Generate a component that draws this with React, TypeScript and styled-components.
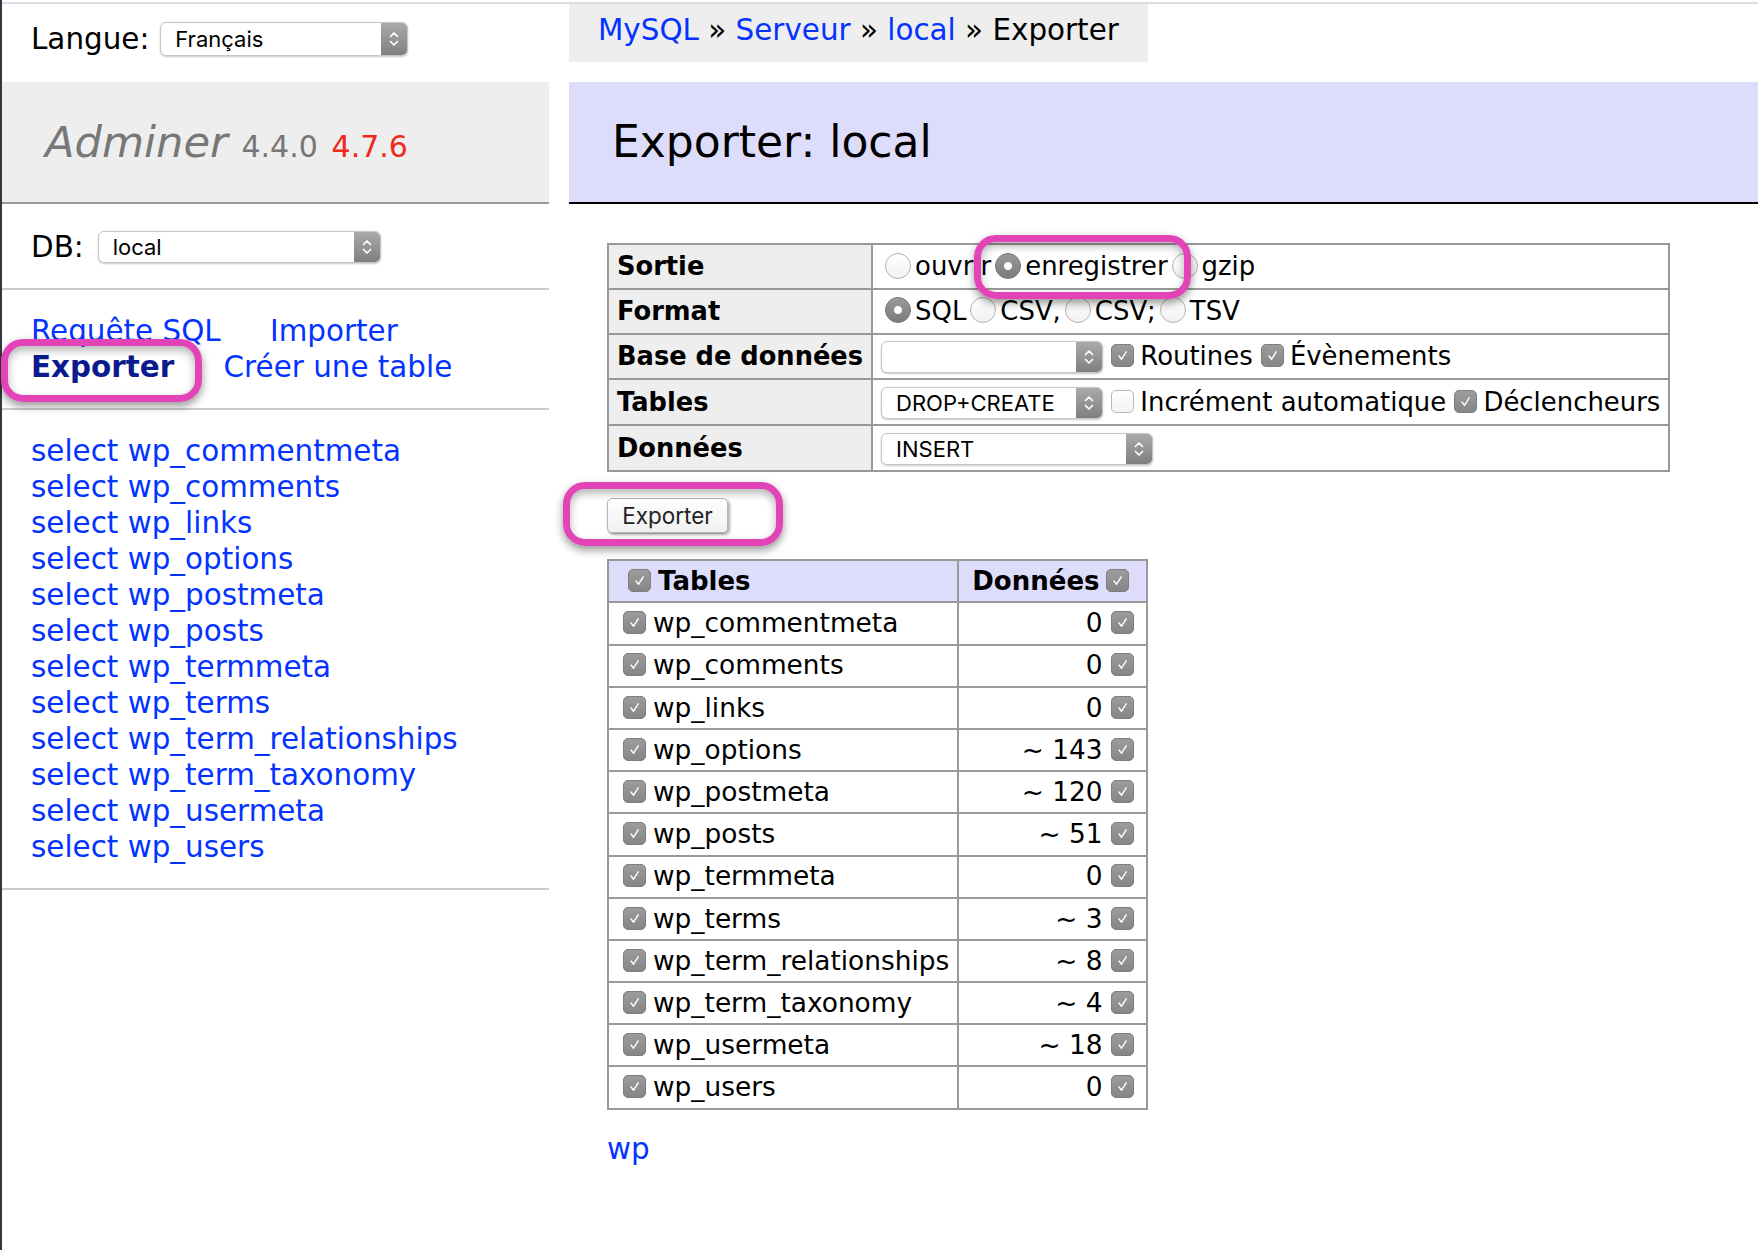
import React from "react";
import styled, { createGlobalStyle, css } from "styled-components";

const GlobalStyle = createGlobalStyle`
  html, body { margin: 0; padding: 0; background: #fff; }
  body { font-family: "DejaVu Sans", Verdana, sans-serif; color: #000; }
  * { box-sizing: border-box; }
`;

const LINK = "#0433ff";
const NAVY = "#0b1a8c";
const CONTROL_FONT = `"Inter", "Liberation Sans", Arial, sans-serif`;

const Page = styled.div`
  position: relative;
  display: flex;
  align-items: flex-start;
  min-height: 1250px;
  padding-top: 4px;
  border-left: 2px solid #34373d;
  background: linear-gradient(#fff 0 2px, #dcdce4 2px 4px, #fff 4px);
  font-family: "DejaVu Sans", Verdana, sans-serif;
  font-size: 29.4px;
  line-height: 36px;
`;

/* ---------- sidebar ---------- */
const Sidebar = styled.aside`
  width: 547px;
  flex: none;
  display: flex;
  flex-direction: column;
`;

const LangBar = styled.div`
  display: flex;
  align-items: center;
  height: 78px;
  padding: 9px 29px 17px;
`;

const Label = styled.span`
  color: #000;
  white-space: nowrap;
`;

const Logo = styled.h1`
  margin: 0;
  height: 122px;
  font-size: 43.2px;
  line-height: 54px;
  font-weight: normal;
  color: #777;
  background: #eee;
  padding: 33px 43px 33px;
  border-bottom: 2px solid #999;
  white-space: nowrap;
`;

const LogoName = styled.a`
  color: #777;
  font-style: italic;
  text-decoration: none;
`;

const Version = styled.span<{ $latest?: boolean }>`
  font-size: 30px;
  line-height: 1;
  color: ${(p) => (p.$latest ? "#ee2a1e" : "#777")};
`;

const MenuSection = styled.div<{ $row?: boolean }>`
  padding: 23px 29px;
  border-bottom: 2px solid #ccc;
  ${(p) =>
    p.$row &&
    css`
      display: flex;
      align-items: center;
      height: 86px;
      padding-top: 25px;
    `}
`;

const MenuLink = styled.a<{ $active?: boolean }>`
  color: ${(p) => (p.$active ? NAVY : LINK)};
  font-weight: ${(p) => (p.$active ? "bold" : "normal")};
  text-decoration: none;
  white-space: nowrap;
  margin-right: 40px;
`;

const TableEntry = styled.div`
  white-space: nowrap;
`;

const PlainLink = styled.a`
  color: ${LINK};
  text-decoration: none;
`;

/* ---------- select (mac style) ---------- */
const SelectBox = styled.span<{ $w: number; $small?: boolean; $ml?: number }>`
  display: inline-flex;
  align-items: stretch;
  width: ${(p) => p.$w}px;
  height: ${(p) => (p.$small ? 32 : 34)}px;
  margin-left: ${(p) => p.$ml ?? 0}px;
  border: 1px solid #c6c6c6;
  border-radius: 6px;
  background: #fff;
  box-shadow: 0 1px 2px rgba(0, 0, 0, 0.22);
  overflow: hidden;
  vertical-align: middle;
  font-family: ${CONTROL_FONT};
  font-size: 22px;
  line-height: 1;
  color: #000;
  font-weight: normal;
`;

const SelectText = styled.span`
  flex: 1;
  display: flex;
  align-items: center;
  padding-left: 14px;
  white-space: nowrap;
`;

const Stepper = styled.span`
  width: 26px;
  flex: none;
  display: flex;
  align-items: center;
  justify-content: center;
  background: linear-gradient(#aaaaaa, #7f7f7f);
`;

const Select: React.FC<{ w: number; value: string; small?: boolean; ml?: number }> = ({
  w,
  value,
  small,
  ml,
}) => (
  <SelectBox $w={w} $small={small} $ml={ml}>
    <SelectText>{value}</SelectText>
    <Stepper>
      <svg width="12" height="20" viewBox="0 0 12 20" fill="none">
        <path d="M2.5 7.5 L6 4 L9.5 7.5" stroke="#fff" strokeWidth="1.7" strokeLinecap="round" strokeLinejoin="round" />
        <path d="M2.5 12.5 L6 16 L9.5 12.5" stroke="#fff" strokeWidth="1.7" strokeLinecap="round" strokeLinejoin="round" />
      </svg>
    </Stepper>
  </SelectBox>
);

/* ---------- checkbox & radio ---------- */
const Box = styled.span<{ $on: boolean; $ml: number; $mr: number }>`
  display: inline-flex;
  align-items: center;
  justify-content: center;
  width: 23px;
  height: 23px;
  border-radius: 5px;
  vertical-align: middle;
  position: relative;
  top: -2px;
  margin: 0 ${(p) => p.$mr}px 0 ${(p) => p.$ml}px;
  ${(p) =>
    p.$on
      ? css`
          background: linear-gradient(#9c9c9c, #868686);
          border: 1px solid #7e7e7e;
        `
      : css`
          background: linear-gradient(#ffffff, #f3f3f3);
          border: 1px solid #b8b8b8;
        `}
`;

const Check: React.FC<{ on?: boolean; ml?: number; mr?: number }> = ({ on = true, ml = 0, mr = 6 }) => (
  <Box $on={on} $ml={ml} $mr={mr}>
    {on && (
      <svg width="13" height="13" viewBox="0 0 13 13" fill="none">
        <path d="M3 7 L5.6 10.2 L10.2 2.8" stroke="#fff" strokeWidth="1.4" strokeLinecap="round" strokeLinejoin="round" />
      </svg>
    )}
  </Box>
);

const Radio = styled.span<{ $on?: boolean }>`
  display: inline-block;
  width: 26px;
  height: 26px;
  border-radius: 50%;
  vertical-align: middle;
  position: relative;
  top: -2px;
  margin: 0 4px 0 4px;
  ${(p) =>
    p.$on
      ? css`
          background: radial-gradient(circle, #fff 0 3.6px, transparent 4.4px), linear-gradient(#9a9a9a, #7c7c7c);
          border: 1px solid #777;
        `
      : css`
          background: linear-gradient(#ffffff, #f1f1f1);
          border: 1px solid #b3b3b3;
        `}
`;

/* ---------- main ---------- */
const Main = styled.main`
  flex: 1;
  min-width: 0;
  margin-left: 20px;
  display: flex;
  flex-direction: column;
`;

const Breadcrumb = styled.nav`
  align-self: flex-start;
  height: 58px;
  line-height: 52px;
  padding: 0 29px;
  background: #eee;
  white-space: nowrap;
`;

const Heading = styled.h2`
  margin: 20px 0 39px;
  height: 122px;
  font-size: 44px;
  line-height: 54px;
  font-weight: normal;
  color: #000;
  padding: 33px 43px 33px;
  background: #ddddfb;
  border-bottom: 2px solid #000;
`;

const Content = styled.div`
  padding-left: 38px;
`;

const Grid = styled.table<{ $size?: number }>`
  border-collapse: collapse;
  font-size: ${(p) => p.$size ?? 25.92}px;
  line-height: 32.4px;
`;

const HeadCell = styled.th`
  background: #eee;
  text-align: left;
  font-weight: bold;
  font-size: 25.7px;
  border: 2px solid #999;
  padding: 5.2px 8px;
  white-space: nowrap;
`;

const Cell = styled.td<{ $right?: boolean; $tight?: boolean }>`
  border: 2px solid #999;
  padding: ${(p) => (p.$tight ? "3.9px 8px" : "5.2px 8px")};
  white-space: nowrap;
  text-align: ${(p) => (p.$right ? "right" : "left")};
`;

const ListHead = styled.th<{ $right?: boolean }>`
  background: #ddddfb;
  font-weight: bold;
  font-size: 26px;
  border: 2px solid #999;
  padding: 3.9px 13px;
  white-space: nowrap;
  text-align: ${(p) => (p.$right ? "right" : "left")};
`;

const Opt = styled.span`
  white-space: nowrap;
`;

const SubmitButton = styled.button`
  display: block;
  margin: 26px 0 0;
  width: 121px;
  height: 35px;
  padding: 0;
  font-family: ${CONTROL_FONT};
  font-size: 22.5px;
  color: #222;
  border: 1px solid #b5b5b5;
  border-radius: 5px;
  background: linear-gradient(#ffffff, #f0f0f0);
  box-shadow: 0 1px 1px rgba(0, 0, 0, 0.2), 2px 2px 3px rgba(0, 0, 0, 0.3);
`;

const ListTable = styled(Grid)`
  margin-top: 26px;
`;

const Footer = styled.p`
  margin: 21px 0 0;
`;

const Callout = styled.div<{ $x: number; $y: number; $w: number; $h: number }>`
  position: absolute;
  left: ${(p) => p.$x}px;
  top: ${(p) => p.$y}px;
  width: ${(p) => p.$w}px;
  height: ${(p) => p.$h}px;
  border: 7px solid #e244b8;
  border-radius: 22px;
  box-shadow: 0 4px 9px rgba(0, 0, 0, 0.42), inset 0 4px 9px rgba(0, 0, 0, 0.3);
  pointer-events: none;
`;

const tableNames: [string, string][] = [
  ["wp_commentmeta", "0"],
  ["wp_comments", "0"],
  ["wp_links", "0"],
  ["wp_options", "~ 143"],
  ["wp_postmeta", "~ 120"],
  ["wp_posts", "~ 51"],
  ["wp_termmeta", "0"],
  ["wp_terms", "~ 3"],
  ["wp_term_relationships", "~ 8"],
  ["wp_term_taxonomy", "~ 4"],
  ["wp_usermeta", "~ 18"],
  ["wp_users", "0"],
];

export default function App() {
  return (
    <>
      <GlobalStyle />
      <Page>
        <Sidebar>
          <LangBar>
            <Label>Langue:</Label>
            <Select w={248} value="Français" ml={11} />
          </LangBar>
          <Logo>
            <LogoName>Adminer</LogoName> <Version>4.4.0</Version> <Version $latest>4.7.6</Version>
          </Logo>
          <MenuSection $row>
            <Label>DB:</Label>
            <Select w={283} value="local" ml={14} small />
          </MenuSection>
          <MenuSection>
            <MenuLink>Requête SQL</MenuLink> <MenuLink>Importer</MenuLink>{" "}
            <MenuLink $active>Exporter</MenuLink> <MenuLink>Créer une table</MenuLink>
          </MenuSection>
          <MenuSection>
            {tableNames.map(([n]) => (
              <TableEntry key={n}>
                <PlainLink>select</PlainLink> <PlainLink>{n}</PlainLink>
              </TableEntry>
            ))}
          </MenuSection>
        </Sidebar>

        <Main>
          <Breadcrumb>
            <PlainLink>MySQL</PlainLink> » <PlainLink>Serveur</PlainLink> » <PlainLink>local</PlainLink> » Exporter
          </Breadcrumb>
          <Heading>Exporter: local</Heading>
          <Content>
            <Grid>
              <tbody>
                <tr>
                  <HeadCell>Sortie</HeadCell>
                  <Cell>
                    <Opt>
                      <Radio />ouvrir
                    </Opt>
                    <Opt>
                      <Radio $on />enregistrer
                    </Opt>
                    <Opt>
                      <Radio />gzip
                    </Opt>
                  </Cell>
                </tr>
                <tr>
                  <HeadCell>Format</HeadCell>
                  <Cell>
                    <Opt>
                      <Radio $on />SQL
                    </Opt>
                    <Opt>
                      <Radio />CSV,
                    </Opt>
                    <Opt>
                      <Radio />CSV;
                    </Opt>
                    <Opt>
                      <Radio />TSV
                    </Opt>
                  </Cell>
                </tr>
                <tr>
                  <HeadCell>Base de données</HeadCell>
                  <Cell>
                    <Select w={222} value="" small /> <Opt>
                      <Check />Routines
                    </Opt>{" "}
                    <Opt>
                      <Check />Évènements
                    </Opt>
                  </Cell>
                </tr>
                <tr>
                  <HeadCell>Tables</HeadCell>
                  <Cell>
                    <Select w={222} value="DROP+CREATE" small /> <Opt>
                      <Check on={false} />Incrément automatique
                    </Opt>{" "}
                    <Opt>
                      <Check />Déclencheurs
                    </Opt>
                  </Cell>
                </tr>
                <tr>
                  <HeadCell>Données</HeadCell>
                  <Cell>
                    <Select w={272} value="INSERT" small />
                  </Cell>
                </tr>
              </tbody>
            </Grid>

            <SubmitButton>Exporter</SubmitButton>

            <ListTable $size={26.4}>
              <thead>
                <tr>
                  <ListHead>
                    <Check ml={6} mr={7} />Tables
                  </ListHead>
                  <ListHead $right>
                    Données
                    <Check ml={6} mr={4} />
                  </ListHead>
                </tr>
              </thead>
              <tbody>
                {tableNames.map(([n, v]) => (
                  <tr key={n}>
                    <Cell $tight>
                      <Check ml={6} mr={7} />
                      {n}
                    </Cell>
                    <Cell $tight $right>
                      {v}
                      <Check ml={8} mr={4} />
                    </Cell>
                  </tr>
                ))}
              </tbody>
            </ListTable>

            <Footer>
              <PlainLink>wp</PlainLink>
            </Footer>
          </Content>
        </Main>

        <Callout $x={-1} $y={339} $w={201} $h={63} />
        <Callout $x={972} $y={235} $w={217} $h={64} />
        <Callout $x={561} $y={482} $w={220} $h={64} />
      </Page>
    </>
  );
}
